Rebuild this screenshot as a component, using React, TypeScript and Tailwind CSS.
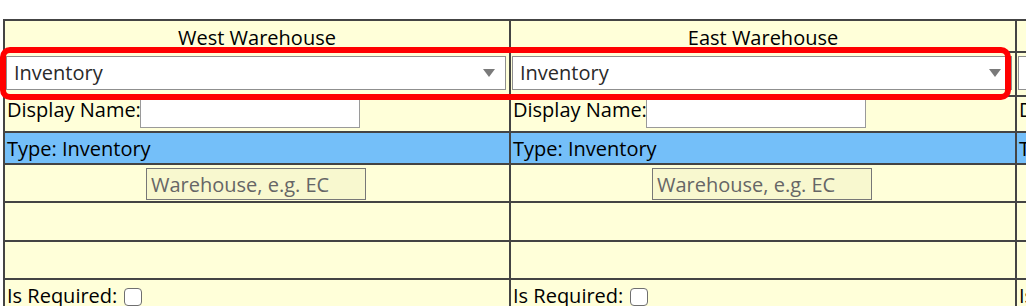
import React from "react";

const FONT = { fontFamily: '"Open Sans", "Noto Sans", sans-serif' };

function Arrow() {
  return (
    <svg width="12" height="8" viewBox="0 0 12 8" className="shrink-0">
      <path d="M0 0 L12 0 L6 8 Z" fill="#7a7a7a" />
    </svg>
  );
}

function Select() {
  return (
    <div className="ml-[1px] mt-[3px] flex h-[34px] w-[500px] items-center justify-between border border-[#8f8f8f] bg-white pl-[7px] pr-[10px] text-[20px] leading-[28px] text-[#2a2a2a]">
      <span>Inventory</span>
      <Arrow />
    </div>
  );
}

const cell = "w-[506px] shrink-0 border-l-2 border-[#444]";

function Column({ title }: { title: string }) {
  return <div className={`${cell} pt-[3px] text-center leading-[28px]`}>{title}</div>;
}

export default function App() {
  const cols = ["West Warehouse", "East Warehouse", ""];
  return (
    <div
      className="relative h-[306px] w-[1026px] overflow-hidden bg-white pl-[3px] pt-[19px] text-[20px] text-black"
      style={FONT}
    >
      <div className="w-[1518px] border-t-2 border-[#444] bg-[#ffffd9]">
        {/* header */}
        <div className="flex h-[32px] border-b-2 border-[#444]">
          {cols.map((c, i) => (
            <Column key={i} title={c} />
          ))}
        </div>
        {/* select row */}
        <div className="flex h-[44px] border-b-2 border-[#444]">
          {cols.map((_, i) => (
            <div key={i} className={cell}>
              <Select />
            </div>
          ))}
        </div>
        {/* display name */}
        <div className="flex h-[36px] border-b-2 border-[#444]">
          {cols.map((_, i) => (
            <div key={i} className={`${cell} flex items-start pl-[2px] leading-[28px]`}>
              <span className="-mt-[1px]">Display Name:</span>
              <div className="-ml-[1px] mt-[1px] h-[30px] w-[220px] border border-[#9a9a9a] bg-white" />
            </div>
          ))}
        </div>
        {/* type row */}
        <div className="flex h-[32px] border-b-2 border-[#444]">
          {cols.map((_, i) => (
            <div key={i} className={`${cell} bg-[#74bff9] pl-[2px] pt-[2px] leading-[28px]`}>
              Type: Inventory
            </div>
          ))}
        </div>
        {/* warehouse input */}
        <div className="flex h-[38px] border-b-2 border-[#444]">
          {cols.map((_, i) => (
            <div key={i} className={`${cell} flex justify-center pt-[3px]`}>
              <div className="-ml-[2px] flex h-[32px] w-[220px] items-center border border-[#777] bg-[#f8f8cf] pl-[4px] pt-[1px] leading-[28px] text-[#666]">
                Warehouse, e.g. EC
              </div>
            </div>
          ))}
        </div>
        {/* empty rows */}
        <div className="flex h-[39px] border-b-2 border-[#444]">
          {cols.map((_, i) => (
            <div key={i} className={cell} />
          ))}
        </div>
        <div className="flex h-[38px] border-b-2 border-[#444]">
          {cols.map((_, i) => (
            <div key={i} className={cell} />
          ))}
        </div>
        {/* is required */}
        <div className="flex h-[40px]">
          {cols.map((_, i) => (
            <div key={i} className={`${cell} flex items-start pl-[2px] pt-[2px] leading-[28px]`}>
              <span>Is Required:</span>
              <span className="ml-[7px] mt-[6px] h-[18px] w-[18px] rounded-[4px] border-[1.5px] border-[#6f6f6f] bg-white" />
            </div>
          ))}
        </div>
      </div>
      {/* red highlight overlay */}
      <div className="pointer-events-none absolute left-0 top-[47px] h-[53px] w-[1011px] rounded-[10px] border-[6px] border-[#ff0000]" />
    </div>
  );
}
